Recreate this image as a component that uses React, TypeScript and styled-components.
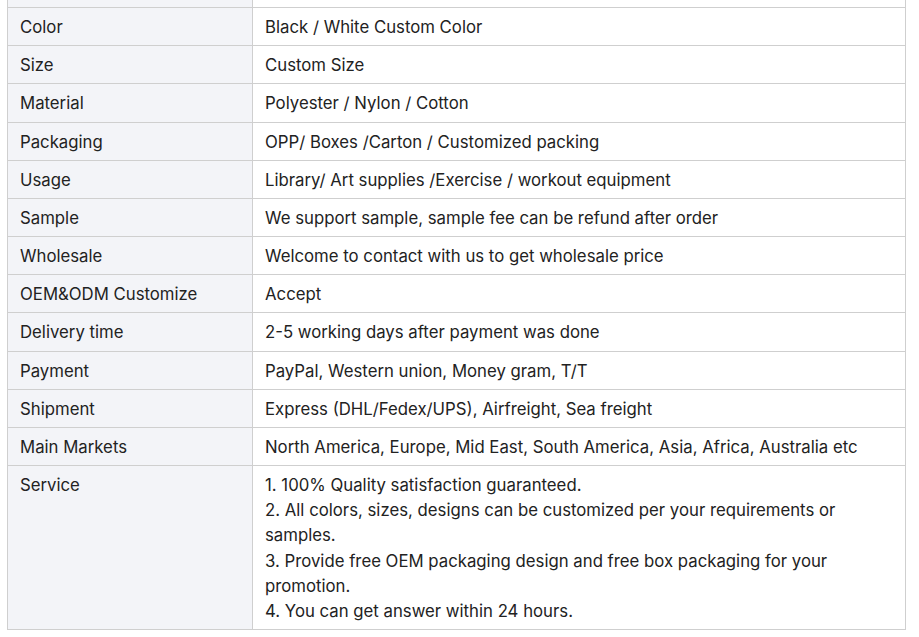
import React from "react";
import styled, { createGlobalStyle } from "styled-components";

const Global = createGlobalStyle`
  html, body { margin: 0; padding: 0; background: #ffffff; }
  body { font-family: Inter, "Noto Sans", sans-serif; color: #222222; }
`;

const Viewport = styled.div`
  width: 919px;
  height: 637px;
  overflow: hidden;
  padding: 0 13px 0 7px;
  box-sizing: border-box;
`;

const Table = styled.table`
  width: 100%;
  margin-top: -31px;
  border-collapse: collapse;
  table-layout: fixed;
  font-size: 16.75px;
  line-height: 25.15px;
`;

const Row = styled.tr``;

const Label = styled.td`
  background: #f3f4f8;
  border: 1px solid #cfcfcf;
  padding: 7px 12px 5px;
  vertical-align: top;
  text-align: left;
`;

const Value = styled.td`
  background: #ffffff;
  border: 1px solid #cfcfcf;
  padding: 7px 12px 5px;
  vertical-align: top;
  text-align: left;
`;

const LabelCol = styled.col`
  width: 245px;
`;

const rows: [string, React.ReactNode][] = [
  ["", ""],
  ["Color", "Black / White Custom Color"],
  ["Size", "Custom Size"],
  ["Material", "Polyester / Nylon / Cotton"],
  ["Packaging", "OPP/ Boxes /Carton / Customized packing"],
  ["Usage", "Library/ Art supplies /Exercise / workout equipment"],
  ["Sample", "We support sample, sample fee can be refund after order"],
  ["Wholesale", "Welcome to contact with us to get wholesale price"],
  ["OEM&ODM Customize", "Accept"],
  ["Delivery time", "2-5 working days after payment was done"],
  ["Payment", "PayPal, Western union, Money gram, T/T"],
  ["Shipment", "Express (DHL/Fedex/UPS), Airfreight, Sea freight"],
  ["Main Markets", "North America, Europe, Mid East, South America, Asia, Africa, Australia etc"],
  [
    "Service",
    <>
      1. 100% Quality satisfaction guaranteed.
      <br />
      2. All colors, sizes, designs can be customized per your requirements or samples.
      <br />
      3. Provide free OEM packaging design and free box packaging for your promotion.
      <br />
      4. You can get answer within 24 hours.
    </>,
  ],
];

export default function App() {
  return (
    <>
      <Global />
      <Viewport>
        <Table>
          <colgroup>
            <LabelCol />
            <col />
          </colgroup>
          <tbody>
            {rows.map(([k, v], i) => (
              <Row key={i}>
                <Label>{k || "\u00a0"}</Label>
                <Value>{v || "\u00a0"}</Value>
              </Row>
            ))}
          </tbody>
        </Table>
      </Viewport>
    </>
  );
}
